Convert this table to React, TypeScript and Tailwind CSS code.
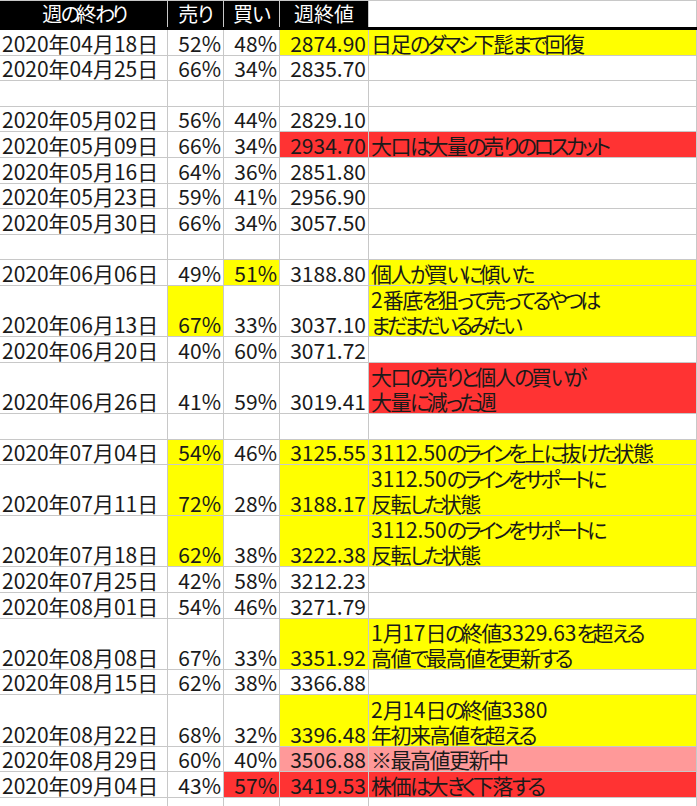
import React from "react";

type Bg = "y" | "r" | "p" | undefined;
type Row = {
  d?: string;
  s?: string;
  b?: string;
  c?: string;
  n?: string[];
  h?: 1 | 2;
  bs?: Bg;
  bb?: Bg;
  bc?: Bg;
  bn?: Bg;
};

const rows: Row[] = [
  { d: "2020年04月18日", s: "52%", b: "48%", c: "2874.90", n: ["日足のダマシ下髭まで回復"], bc: "y", bn: "y" },
  { d: "2020年04月25日", s: "66%", b: "34%", c: "2835.70" },
  {},
  { d: "2020年05月02日", s: "56%", b: "44%", c: "2829.10" },
  { d: "2020年05月09日", s: "66%", b: "34%", c: "2934.70", n: ["大口は大量の売りのロスカット"], bc: "r", bn: "r" },
  { d: "2020年05月16日", s: "64%", b: "36%", c: "2851.80" },
  { d: "2020年05月23日", s: "59%", b: "41%", c: "2956.90" },
  { d: "2020年05月30日", s: "66%", b: "34%", c: "3057.50" },
  {},
  { d: "2020年06月06日", s: "49%", b: "51%", c: "3188.80", n: ["個人が買いに傾いた"], bb: "y", bn: "y" },
  { d: "2020年06月13日", s: "67%", b: "33%", c: "3037.10", n: ["2番底を狙って売ってるやつは", "まだまだいるみたい"], h: 2, bs: "y", bn: "y" },
  { d: "2020年06月20日", s: "40%", b: "60%", c: "3071.72" },
  { d: "2020年06月26日", s: "41%", b: "59%", c: "3019.41", n: ["大口の売りと個人の買いが", "大量に減った週"], h: 2, bn: "r" },
  {},
  { d: "2020年07月04日", s: "54%", b: "46%", c: "3125.55", n: ["3112.50のラインを上に抜けた状態"], bs: "y", bc: "y", bn: "y" },
  { d: "2020年07月11日", s: "72%", b: "28%", c: "3188.17", n: ["3112.50のラインをサポートに", "反転した状態"], h: 2, bs: "y", bc: "y", bn: "y" },
  { d: "2020年07月18日", s: "62%", b: "38%", c: "3222.38", n: ["3112.50のラインをサポートに", "反転した状態"], h: 2, bs: "y", bc: "y", bn: "y" },
  { d: "2020年07月25日", s: "42%", b: "58%", c: "3212.23" },
  { d: "2020年08月01日", s: "54%", b: "46%", c: "3271.79" },
  { d: "2020年08月08日", s: "67%", b: "33%", c: "3351.92", n: ["1月17日の終値3329.63を超える", "高値で最高値を更新する"], h: 2, bc: "y", bn: "y" },
  { d: "2020年08月15日", s: "62%", b: "38%", c: "3366.88" },
  { d: "2020年08月22日", s: "68%", b: "32%", c: "3396.48", n: ["2月14日の終値3380", "年初来高値を超える"], h: 2, bc: "y", bn: "y" },
  { d: "2020年08月29日", s: "60%", b: "40%", c: "3506.88", n: ["※最高値更新中"], bc: "p", bn: "p" },
  { d: "2020年09月04日", s: "43%", b: "57%", c: "3419.53", n: ["株価は大きく下落する"], bb: "r", bc: "r", bn: "r" },
  {},
];

function bgClass(b: Bg) {
  if (b === "y") return "bg-[#ffff00]";
  if (b === "r") return "bg-[#ff3333]";
  if (b === "p") return "bg-[#ff9999]";
  return "bg-white";
}

const KANA = /^[\u3041-\u30ff]+$/;
const DIGIT = /^[0-9.%]+$/;

function Jp({ t }: { t: string }) {
  const parts = t.split(/([\u3041-\u30ff]+|[0-9.%]+)/).filter((p) => p !== "");
  return (
    <>
      {parts.map((p, i) =>
        KANA.test(p) ? (
          <span key={i} className="tracking-[-3.5px]">
            {p}
          </span>
        ) : DIGIT.test(p) ? (
          <span key={i}>{p}</span>
        ) : (
          <span key={i} className="tracking-[-1.5px]">
            {p}
          </span>
        )
      )}
    </>
  );
}

function Cell({
  bg,
  right,
  children,
}: {
  bg?: Bg;
  right?: boolean;
  children?: React.ReactNode;
}) {
  return (
    <div
      className={
        "flex items-end whitespace-nowrap border-r border-[#c8c8c8] " +
        bgClass(bg) +
        (right ? " justify-end pr-[2px]" : " justify-start pl-[2px]")
      }
    >
      <div className="-mb-[1px] leading-[25px]">{children}</div>
    </div>
  );
}

export default function App() {
  return (
    <div className="w-[697px] h-[806px] overflow-hidden bg-white text-[21px] text-[#1a1a1a] [font-family:'Noto_Sans_CJK_JP',sans-serif] [font-feature-settings:'palt']">
      <div className="grid h-[27px] grid-cols-[168px_56px_56px_89px_328px] border-t border-[#c8c8c8] text-[20px] text-white">
        <div className="flex items-center justify-center border-r border-[#c8c8c8] bg-black leading-none">
          <Jp t="週の終わり" />
        </div>
        <div className="flex items-center justify-center border-r border-[#c8c8c8] bg-black leading-none">
          <span className="tracking-[-1px]">売り</span>
        </div>
        <div className="flex items-center justify-center border-r border-[#c8c8c8] bg-black leading-none">
          <span className="tracking-[-1px]">買い</span>
        </div>
        <div className="flex items-center justify-center border-r border-[#c8c8c8] bg-black leading-none">週終値</div>
        <div className="border-r border-[#c8c8c8] bg-white" />
      </div>
      <div className="h-[3px] bg-black" />
      {rows.map((r, i) => (
        <div
          key={i}
          className={
            "grid grid-cols-[168px_56px_56px_89px_328px] border-b border-[#c8c8c8] " +
            (r.h === 2 ? "h-[51.2px]" : "h-[25.6px]")
          }
        >
          <Cell>{r.d}</Cell>
          <Cell bg={r.bs} right>
            {r.s}
          </Cell>
          <Cell bg={r.bb} right>
            {r.b}
          </Cell>
          <Cell bg={r.bc} right>
            {r.c}
          </Cell>
          <Cell bg={r.bn}>
            {r.n?.map((t, j) => (
              <div key={j}>
                <Jp t={t} />
              </div>
            ))}
          </Cell>
        </div>
      ))}
    </div>
  );
}
